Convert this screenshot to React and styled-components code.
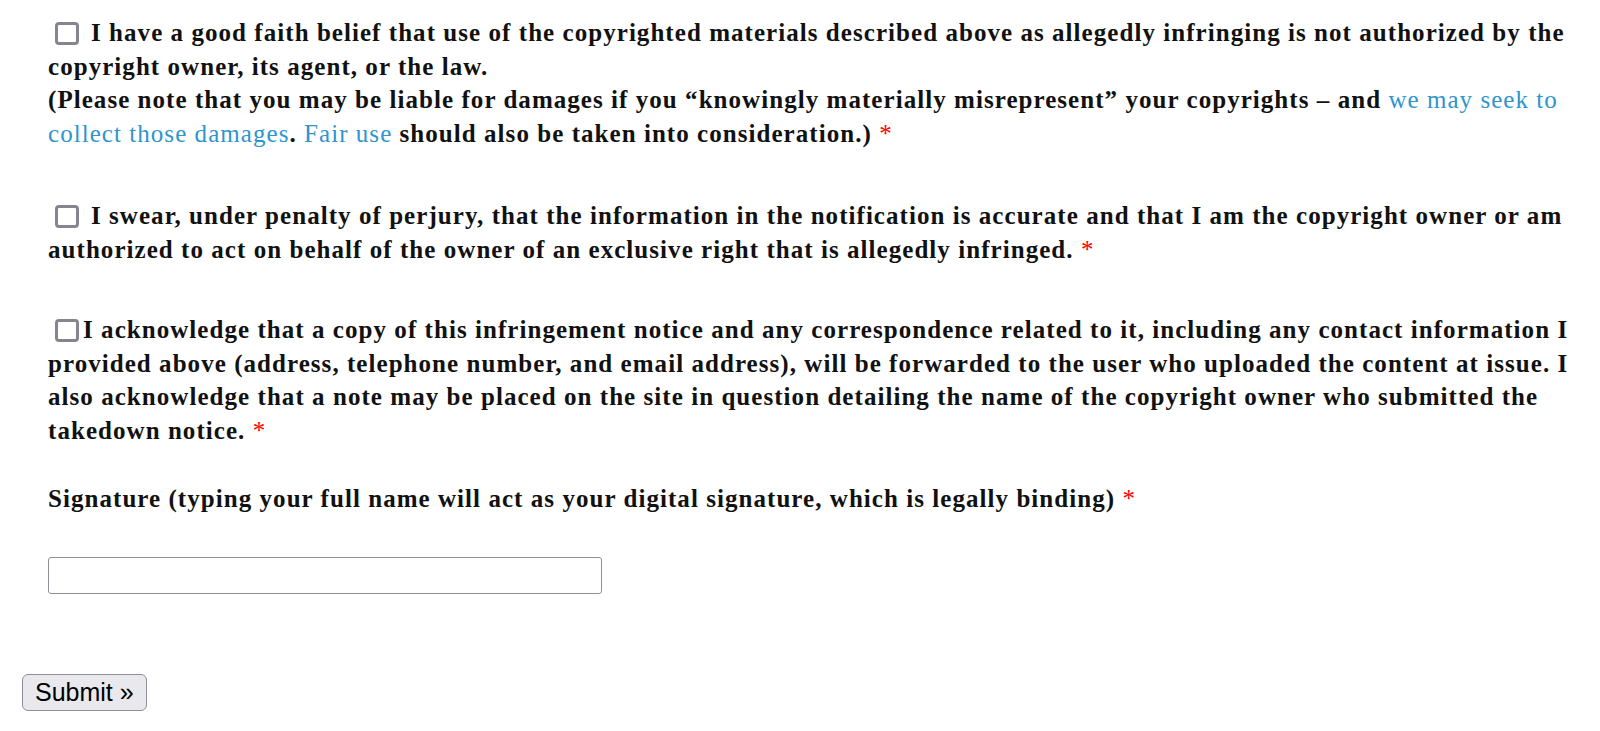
import styled, { createGlobalStyle } from "styled-components";


const GlobalStyle = createGlobalStyle`
	html, body {
		margin: 0;
		padding: 0;
		background: #ffffff;
	}
`;

const FormBase = styled.form`
	box-sizing: border-box;
	width: 1600px;
	padding: 16px 20px 20px 22px;

	font-family: "Liberation Serif", "DejaVu Serif", serif;
	font-weight: 700;
	font-size: 25px;
	line-height: 33.5px;
	color: #111111;
`;

const FieldBlock = styled.div`
	padding-left: 26px;
	margin-bottom: ${ (props) => props.$gap }px;
`;

const ParaText = styled.p`
	margin: 0;
	letter-spacing: 1.05px;
`;

const CheckBox = styled.input.attrs({ type: "checkbox" })`
	appearance: none;
	box-sizing: border-box;
	width: 24px;
	height: 23px;
	margin: 0 ${ (props) => props.$spaced ? 12 : 4 }px 0 7px;

	border: 3px solid #86858f;
	border-radius: 4px;
	background: #ffffff;

	vertical-align: -4px;
`;

const TextLink = styled.a`
	color: #2e95cd;
	font-weight: 400;
	text-decoration: none;
`;

const Required = styled.span`
	color: #ff0000;
	font-weight: 400;
`;

const SignatureInput = styled.input.attrs({ type: "text" })`
	display: block;
	box-sizing: border-box;
	width: 554px;
	height: 37px;
	margin-top: 41.5px;

	border: 1px solid #8f8f9d;
	border-radius: 3px;
	background: #ffffff;
`;

const SubmitButton = styled.button`
	box-sizing: border-box;
	height: 37px;
	margin-top: 80px;
	padding: 0 12px;

	font-family: "Liberation Sans", Arial, sans-serif;
	font-size: 25px;
	color: #000000;

	background: #e9e9ed;
	border: 1px solid #8f8f9d;
	border-radius: 6px;
`;


export default function App() {
	return (
		<>
			<GlobalStyle/>
			<FormBase onSubmit={ (e) => e.preventDefault() }>
				<FieldBlock $gap={ 49 }>
					<ParaText>
						<CheckBox $spaced/>I have a good faith belief that use of the copyrighted materials described above as allegedly infringing is not authorized by the copyright owner, its agent, or the law.
					</ParaText>
					<ParaText>
						(Please note that you may be liable for damages if you “knowingly materially misrepresent” your copyrights – and <TextLink href="#">we may seek to collect those damages</TextLink>. <TextLink href="#">Fair use</TextLink> should also be taken into consideration.) <Required>*</Required>
					</ParaText>
				</FieldBlock>
				<FieldBlock $gap={ 47 }>
					<ParaText>
						<CheckBox $spaced/>I swear, under penalty of perjury, that the information in the notification is accurate and that I am the copyright owner or am authorized to act on behalf of the owner of an exclusive right that is allegedly infringed. <Required>*</Required>
					</ParaText>
				</FieldBlock>
				<FieldBlock $gap={ 35 }>
					<ParaText>
						<CheckBox/>I acknowledge that a copy of this infringement notice and any correspondence related to it, including any contact information I provided above (address, telephone number, and email address), will be forwarded to the user who uploaded the content at issue. I also acknowledge that a note may be placed on the site in question detailing the name of the copyright owner who submitted the takedown notice. <Required>*</Required>
					</ParaText>
				</FieldBlock>
				<FieldBlock $gap={ 0 }>
					<ParaText>
						Signature (typing your full name will act as your digital signature, which is legally binding) <Required>*</Required>
					</ParaText>
					<SignatureInput/>
				</FieldBlock>
				<SubmitButton type="submit">Submit »</SubmitButton>
			</FormBase>
		</>);
}
